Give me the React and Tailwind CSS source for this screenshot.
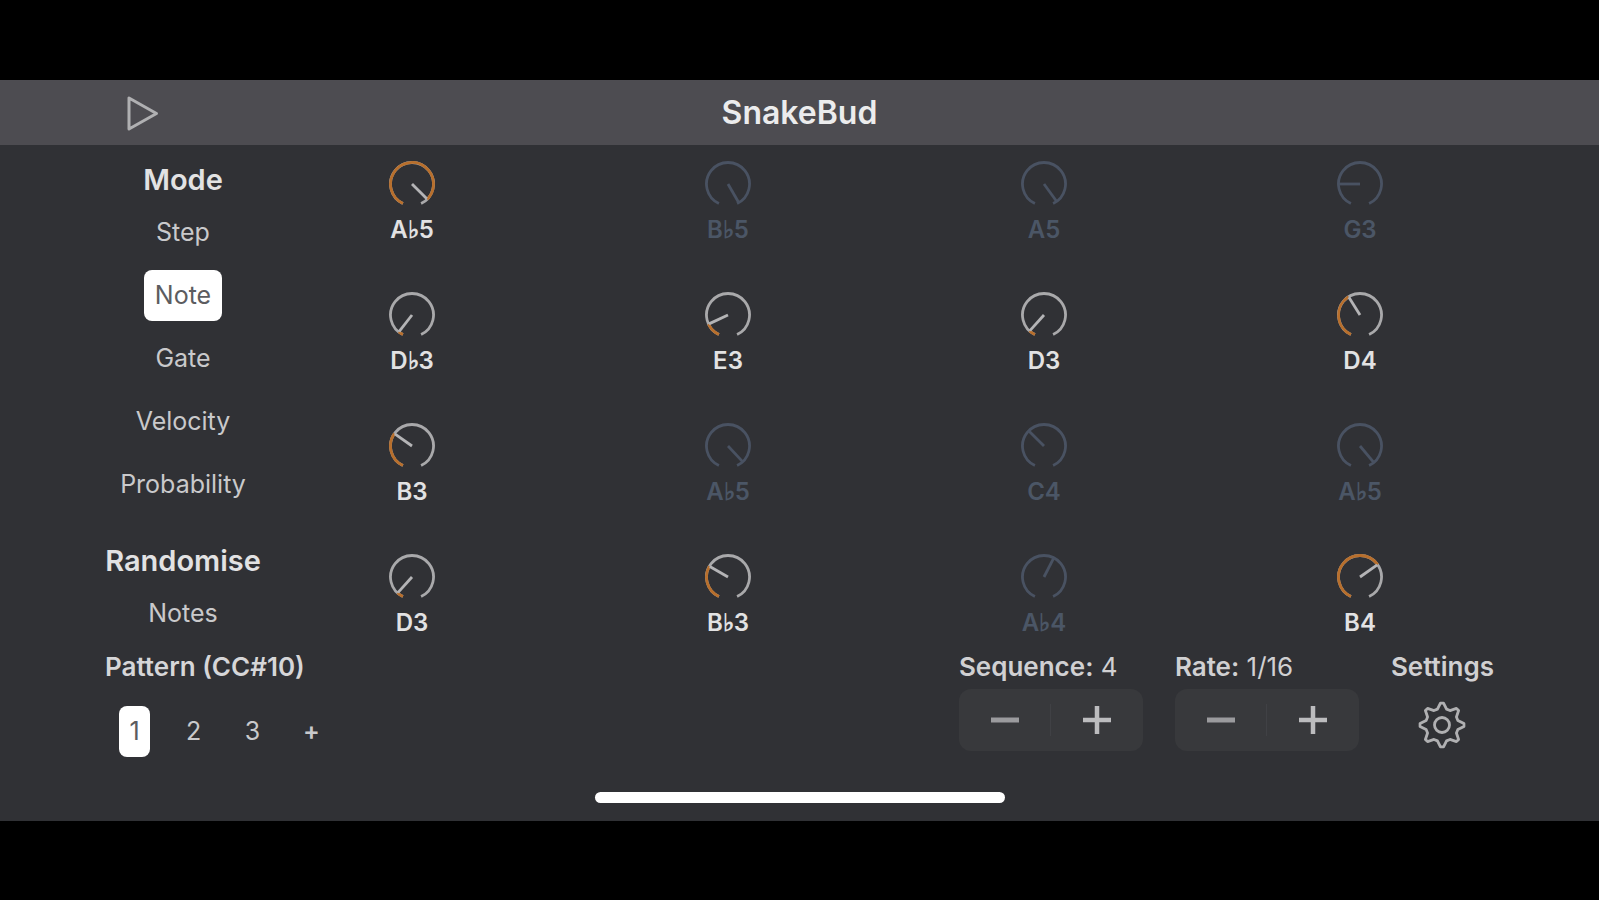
import { useState } from "react";

const START = -155;
const END = 155;

const MODES = ["Step", "Note", "Gate", "Velocity", "Probability"];

const STEPS = [
  { note: "A♭5", angle: 135, on: true },
  { note: "B♭5", angle: 150, on: false },
  { note: "A5", angle: 144, on: false },
  { note: "G3", angle: -90, on: false },
  { note: "D♭3", angle: -142, on: true },
  { note: "E3", angle: -115, on: true },
  { note: "D3", angle: -138, on: true },
  { note: "D4", angle: -32, on: true },
  { note: "B3", angle: -55, on: true },
  { note: "A♭5", angle: 137, on: false },
  { note: "C4", angle: -45, on: false },
  { note: "A♭5", angle: 140, on: false },
  { note: "D3", angle: -138, on: true },
  { note: "B♭3", angle: -60, on: true },
  { note: "A♭4", angle: 27, on: false },
  { note: "B4", angle: 55, on: true },
];

function point(angle, radius) {
  const rad = (angle * Math.PI) / 180;
  return [24 + radius * Math.sin(rad), 24 - radius * Math.cos(rad)];
}

function arc(from, to, radius) {
  const [x1, y1] = point(from, radius);
  const [x2, y2] = point(to, radius);
  return `M${x1} ${y1}A${radius} ${radius} 0 ${to - from > 180 ? 1 : 0} 1 ${x2} ${y2}`;
}

function gearOutline() {
  const pts = [];
  for (let i = 0; i < 8; i++) {
    const a = i * 45;
    pts.push(point(a - 4, 22), point(a + 4, 22), point(a + 16, 16.5), point(a + 29, 16.5));
  }
  return "M" + pts.map((p) => p.join(" ")).join("L") + "Z";
}

function Knob({ step, index }) {
  const [x, y] = point(step.angle, 21);
  return (
    <label
      className={
        "relative flex w-16 flex-col items-center gap-2 text-2xl leading-7 font-semibold " +
        (step.on ? "text-[#e2e2e3]" : "text-[#4b5666]")
      }
    >
      <input
        type="range"
        min={START}
        max={END}
        defaultValue={step.angle}
        aria-label={`Step ${index + 1} note`}
        className="sr-only"
      />
      <svg viewBox="0 0 48 48" className="size-12" fill="none" strokeWidth="2.8" aria-hidden="true">
        <path d={arc(START, END, 21.5)} stroke={step.on ? "#a9a9ab" : "#495262"} />
        {step.on && <path d={arc(START, step.angle, 21.5)} stroke="#b86f2c" />}
        <path d={`M24 24L${x} ${y}`} stroke={step.on ? "#b4b4b6" : "#495262"} />
      </svg>
      <span>{step.note}</span>
    </label>
  );
}

function Choice({ selected, onClick, children, className }) {
  return (
    <button
      type="button"
      aria-pressed={selected}
      onClick={onClick}
      className={
        "flex h-[51px] items-center justify-center rounded-lg text-[25px] " +
        className +
        (selected ? " bg-white text-[#5c5c60]" : " text-[#c9c9cb]")
      }
    >
      {children}
    </button>
  );
}

function Stepper({ name, value, onDown, onUp }) {
  return (
    <div role="group" aria-label={name} className="flex w-46 flex-col gap-2">
      <p className="leading-7 whitespace-nowrap text-[#d0d0d2]">
        <span className="font-semibold">{name}:</span> {value}
      </p>
      <div className="flex h-[62px] items-center rounded-xl bg-[#38393c]">
        <button type="button" aria-label={`Decrease ${name}`} onClick={onDown} className="flex h-full flex-1 items-center justify-center">
          <svg viewBox="0 0 28 28" className="size-7" aria-hidden="true">
            <path d="M0 14H28" stroke="#9b9b9e" strokeWidth="5" />
          </svg>
        </button>
        <span className="h-8 w-px bg-[#404145]" />
        <button type="button" aria-label={`Increase ${name}`} onClick={onUp} className="flex h-full flex-1 items-center justify-center">
          <svg viewBox="0 0 28 28" className="size-7" aria-hidden="true">
            <path d="M0 14H28M14 0V28" stroke="#bcbcbe" strokeWidth="4.500" />
          </svg>
        </button>
      </div>
    </div>
  );
}

export default function App() {
  const [mode, setMode] = useState("Note");
  const [pattern, setPattern] = useState(1);
  const [sequence, setSequence] = useState(4);
  const [rate, setRate] = useState(16);

  return (
    <div className="min-h-screen bg-black py-20 font-['Inter',sans-serif]">
      <div className="bg-[#303135] pb-[18px]">
        <header className="grid grid-cols-[1fr_auto_1fr] items-center bg-[#4d4c51] px-31 pt-[13px] pb-3">
          <button type="button" aria-label="Play" className="size-10 justify-self-start">
            <svg viewBox="0 0 40 40" className="size-10" fill="none" aria-hidden="true">
              <path d="M5 5V36L32.500 20.500Z" stroke="#b0b0b2" strokeWidth="3" strokeLinejoin="round" />
            </svg>
          </button>
          <h1 className="text-[32px] leading-10 font-semibold text-[#ececed]">SnakeBud</h1>
        </header>

        <main>
          <div className="flex pt-[15px]">
            <section className="ml-[105px] flex w-[156px] flex-col items-center pt-0.5">
              <h2 className="mb-[9px] text-[29px] leading-9 font-semibold text-[#e2e2e3]">Mode</h2>
              <div className="flex flex-col items-center gap-3">
                {MODES.map((m) => (
                  <Choice key={m} selected={mode === m} onClick={() => setMode(m)} className="px-[11px]">
                    {m}
                  </Choice>
                ))}
              </div>
              <h2 className="mt-[33px] mb-[9px] text-[29px] leading-9 font-semibold text-[#e2e2e3]">Randomise</h2>
              <Choice className="px-[11px]">Notes</Choice>
            </section>
            <section aria-label="Steps" className="mr-[207px] ml-[119px] grid flex-1 grid-cols-[repeat(4,64px)] content-start justify-between gap-y-[47px]">
              {STEPS.map((step, i) => (
                <Knob key={i} step={step} index={i} />
              ))}
            </section>
          </div>

          <div className="mt-3.5 flex justify-between pr-[105px] pl-[105px] text-[26px]">
            <section>
              <h2 className="leading-7 font-semibold text-[#d6d6d8]">Pattern (CC#10)</h2>
              <div className="mt-[25px] ml-3.5 flex gap-7">
                {[1, 2, 3].map((n) => (
                  <Choice key={n} selected={pattern === n} onClick={() => setPattern(n)} className="w-[31px]">
                    {n}
                  </Choice>
                ))}
                <Choice className="w-[31px] font-semibold">+</Choice>
              </div>
            </section>
            <section className="flex gap-8">
              <Stepper
                name="Sequence"
                value={sequence}
                onDown={() => setSequence(Math.max(1, sequence - 1))}
                onUp={() => setSequence(sequence + 1)}
              />
              <Stepper
                name="Rate"
                value={`1/${rate}`}
                onDown={() => setRate(Math.max(1, rate / 2))}
                onUp={() => setRate(Math.min(64, rate * 2))}
              />
              <div className="flex flex-col items-center gap-5">
                <h2 className="leading-7 font-semibold text-[#d0d0d2]">Settings</h2>
                <button type="button" aria-label="Settings">
                  <svg viewBox="0 0 48 48" className="size-12" fill="none" stroke="#b0b0b2" strokeWidth="2.800" strokeLinejoin="round" aria-hidden="true">
                    <path d={gearOutline()} />
                    <circle cx="24" cy="24" r="7.500" />
                  </svg>
                </button>
              </div>
            </section>
          </div>
          <div className="mx-auto mt-[35px] h-[11px] w-[410px] rounded-full bg-white" />
        </main>
      </div>
    </div>
  );
}
